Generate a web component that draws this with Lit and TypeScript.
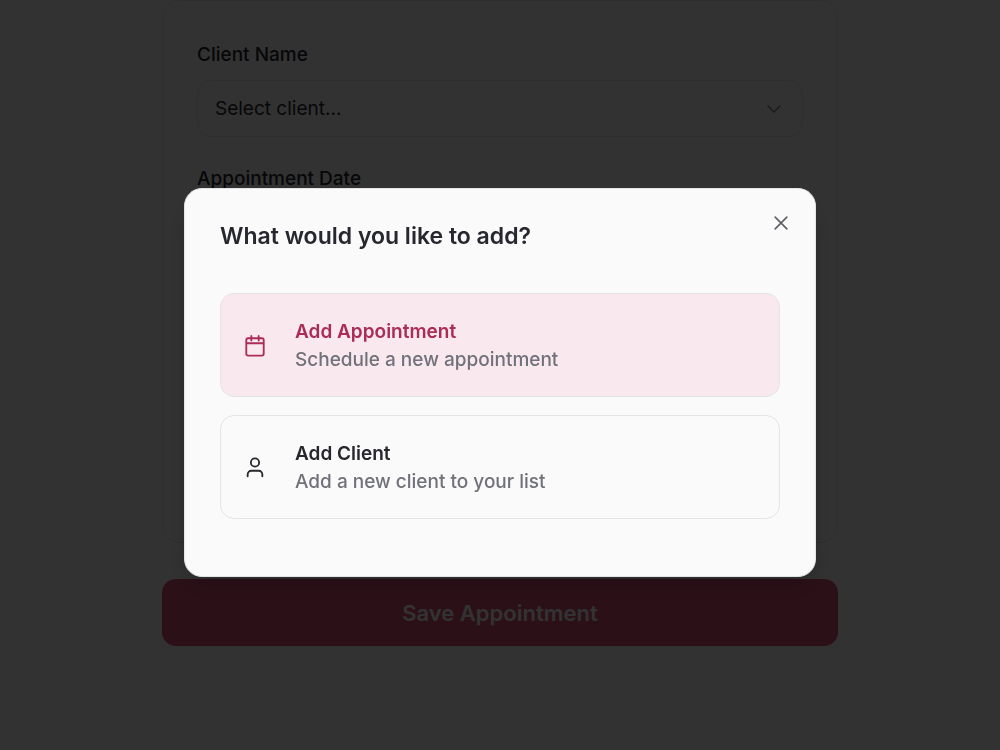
import { LitElement, html, css } from "lit";
import { customElement, state } from "lit/decorators.js";

@customElement("app-root")
export class AppRoot extends LitElement {
  @state() private open = true;

  static styles = css`
    :host {
      display: block;
      min-height: 100vh;
      background: #fafafa;
      color: #27272f;
      font-family: Inter, "Liberation Sans", sans-serif;
      font-size: 19px;
      line-height: 28px;
    }
    * {
      box-sizing: border-box;
    }
    button,
    select,
    input {
      font: inherit;
      color: inherit;
      margin: 0;
    }
    svg {
      display: block;
      fill: none;
      stroke: currentColor;
      stroke-width: 2;
      stroke-linecap: round;
      stroke-linejoin: round;
    }
    .page {
      display: flex;
      flex-direction: column;
      gap: 36px;
      max-width: 676px;
      margin: 0 auto;
    }
    .card {
      display: flex;
      flex-direction: column;
      gap: 28px;
      min-height: 543px;
      padding: 40px 34px 34px;
      border: 1px solid #e4e4e7;
      border-radius: 18px;
    }
    .field {
      display: grid;
      gap: 11px;
    }
    .field label {
      font-weight: 500;
    }
    .control {
      display: grid;
      align-items: center;
    }
    .control > * {
      grid-area: 1 / 1;
    }
    .control svg {
      justify-self: end;
      margin-right: 20px;
      color: #85858c;
      pointer-events: none;
    }
    .box {
      width: 100%;
      height: 57px;
      padding: 0 17px;
      appearance: none;
      background: #fafafa;
      border: 1px solid #e4e4e7;
      border-radius: 14px;
    }
    .save {
      height: 67px;
      border: 0;
      border-radius: 14px;
      background: #d75078;
      color: #fafafa;
      font-size: 22px;
      font-weight: 600;
    }
    .overlay {
      position: fixed;
      inset: 0;
      display: flex;
      align-items: center;
      justify-content: center;
      padding: 15px 16px 0;
      background: rgba(0, 0, 0, 0.8);
    }
    .dialog {
      position: relative;
      display: flex;
      flex-direction: column;
      gap: 43px;
      width: 100%;
      max-width: 632px;
      padding: 33px 35px 57px;
      background: #fafafa;
      border: 1px solid #e4e4e7;
      border-radius: 18px;
      box-shadow: 0 12px 24px -4px rgba(0, 0, 0, 0.2);
    }
    h2 {
      margin: 0;
      font-size: 23px;
      line-height: 28px;
      font-weight: 600;
    }
    .close {
      position: absolute;
      top: 24px;
      right: 24px;
      padding: 0;
      border: 0;
      background: none;
      color: #606066;
    }
    .options {
      display: grid;
      gap: 18px;
    }
    .option {
      display: flex;
      align-items: center;
      gap: 29px;
      padding: 24px 23px 22px;
      background: none;
      border: 1px solid #e4e4e7;
      border-radius: 14px;
      text-align: left;
    }
    .option.active {
      background: #f9e9ee;
    }
    .active svg,
    .active .name {
      color: #aa2c57;
    }
    .name,
    .hint {
      display: block;
    }
    .name {
      font-weight: 600;
    }
    .hint {
      color: #71717a;
      font-weight: 500;
    }
  `;

  private close = () => {
    this.open = false;
  };

  render() {
    return html`
      <main class="page">
        <form class="card">
          <div class="field">
            <label for="client">Client Name</label>
            <div class="control">
              <select id="client" class="box">
                <option>Select client...</option>
              </select>
              <svg width="18" height="18" viewBox="0 0 24 24"><path d="m4 8 8 8 8-8" /></svg>
            </div>
          </div>
          <div class="field">
            <label for="date">Appointment Date</label>
            <input id="date" class="box" type="text" />
          </div>
        </form>
        <button class="save">Save Appointment</button>
      </main>
      ${this.open
        ? html`
            <div class="overlay">
              <section class="dialog" role="dialog" aria-modal="true" aria-labelledby="title">
                <h2 id="title">What would you like to add?</h2>
                <button class="close" aria-labelledby="title" @click=${this.close}>
                  <svg width="20" height="20" viewBox="0 0 24 24">
                    <path d="m5 5 14 14M19 5 5 19" />
                  </svg>
                </button>
                <div class="options">
                  <button class="option active">
                    <svg width="22" height="22" viewBox="0 0 24 24">
                      <path d="M8 1v5M16 1v5M3 9h18" />
                      <rect width="19" height="19" x="2.5" y="3.5" rx="2" />
                    </svg>
                    <span>
                      <span class="name">Add Appointment</span>
                      <span class="hint">Schedule a new appointment</span>
                    </span>
                  </button>
                  <button class="option">
                    <svg width="22" height="22" viewBox="0 0 24 24">
                      <path d="M20 21v-2a4 4 0 0 0-4-4H8a4 4 0 0 0-4 4v2" />
                      <circle cx="12" cy="6" r="4.5" />
                    </svg>
                    <span>
                      <span class="name">Add Client</span>
                      <span class="hint">Add a new client to your list</span>
                    </span>
                  </button>
                </div>
              </section>
            </div>
          `
        : null}
    `;
  }
}
